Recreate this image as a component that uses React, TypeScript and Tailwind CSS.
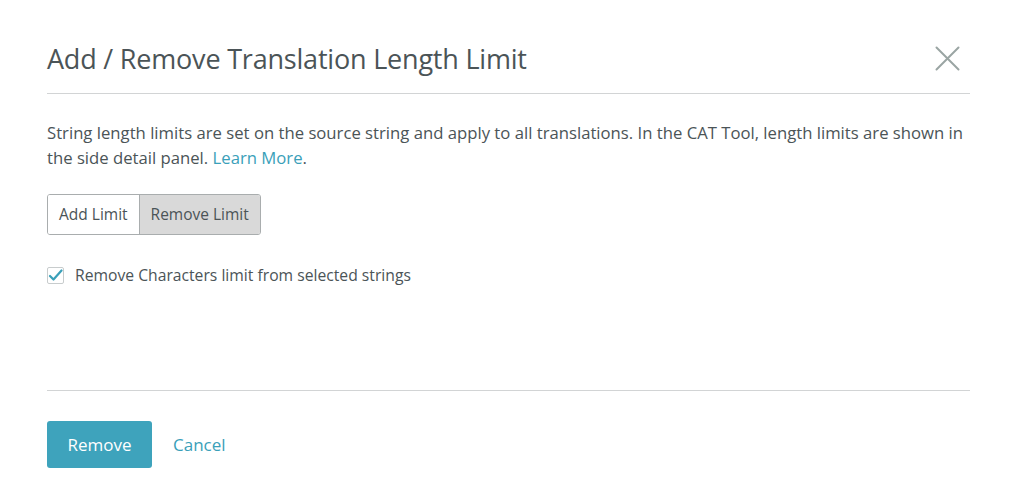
import { useState } from 'react';

export default function App() {
    const [mode, setMode] = useState<'add' | 'remove'>('remove');
    const [checked, setChecked] = useState(true);

    return (
        <div className="h-[491px] w-[1018px] bg-white font-['Open_Sans',sans-serif] text-[#4b5457]">
            <div className="px-[47px] pt-[42px] pr-[48px]">
                {/* Header */}
                <div className="flex items-center justify-between border-b border-[#d2d4d5] pb-[18px]">
                    <h1 className="text-[27px] leading-[33px] font-normal tracking-[-0.2px] text-[#4b5457]">
                        Add / Remove Translation Length Limit
                    </h1>
                    <button className="mr-[10px] text-[#9aa5a3]" aria-label="Close">
                        <svg width="25" height="25" viewBox="0 0 25 25" fill="none" stroke="currentColor" strokeWidth="2" strokeLinecap="round">
                            <path d="M1.5 1.5 L23.5 23.5 M23.5 1.5 L1.5 23.5" />
                        </svg>
                    </button>
                </div>

                {/* Body */}
                <div className="h-[297px] border-b border-[#d2d4d5] pt-[26px]">
                    <p className="text-[16.7px] leading-[25px]">
                        String length limits are set on the source string and apply to all translations. In the CAT Tool, length limits are shown in the side detail panel.{' '}
                        <a href="#" className="text-[#3aa0b9]">Learn More</a>.
                    </p>

                    <div className="mt-[24px] inline-flex overflow-hidden rounded-[3px] border border-[#a9adae] text-[15.5px]">
                        <button
                            onClick={() => setMode('add')}
                            className={`h-[39px] px-[11px] ${mode === 'add' ? 'bg-[#d9d9d9]' : 'bg-white'}`}
                        >
                            Add Limit
                        </button>
                        <button
                            onClick={() => setMode('remove')}
                            className={`h-[39px] border-l border-[#a9adae] px-[11px] ${mode === 'remove' ? 'bg-[#d9d9d9]' : 'bg-white'}`}
                        >
                            Remove Limit
                        </button>
                    </div>

                    <label className="mt-[29px] flex items-center gap-[11px] text-[15.7px]">
                        <span
                            onClick={() => setChecked(!checked)}
                            className="flex h-[17px] w-[17px] items-center justify-center rounded-[2px] border border-[#c8cccd] bg-white"
                        >
                            {checked && (
                                <svg width="15" height="13" viewBox="0 0 15 13" fill="none" stroke="#3aa0b9" strokeWidth="2.2" strokeLinecap="round" strokeLinejoin="round">
                                    <path d="M2 7 L5.5 10.5 L13.5 1.5" />
                                </svg>
                            )}
                        </span>
                        Remove Characters limit from selected strings
                    </label>
                </div>

                {/* Footer */}
                <div className="flex items-center gap-[21px] pt-[30px]">
                    <button className="h-[47px] w-[105px] rounded-[3px] bg-[#3ea3bc] text-[17px] text-white">
                        Remove
                    </button>
                    <button className="text-[17px] text-[#3aa0b9]">Cancel</button>
                </div>
            </div>
        </div>
    );
}
